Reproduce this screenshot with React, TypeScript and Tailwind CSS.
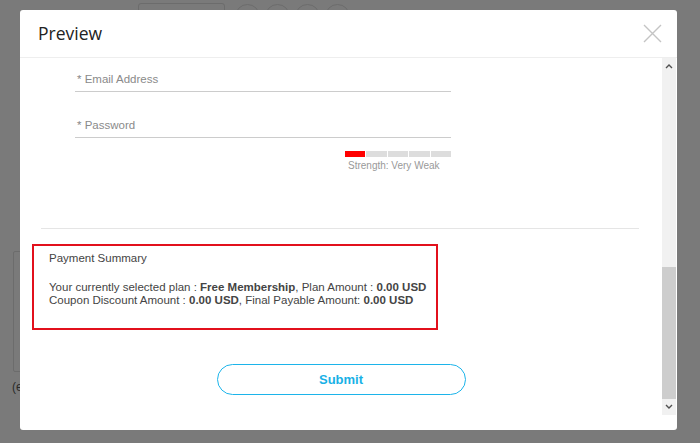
import React from "react";

export default function App() {
  return (
    <div className="relative w-[700px] h-[443px] overflow-hidden bg-[#7a7a7a] pt-[10px] pl-[20px]" style={{ fontFamily: '"Liberation Sans", Arial, sans-serif' }}>
      {/* background page elements under the overlay */}
      <div className="absolute left-[138px] top-[3px] w-[87px] h-[30px] rounded-[3px] border border-[#6c6c6c]" />
      {[235, 265, 295, 325].map((x) => (
        <div key={x} className="absolute top-[4px] w-[25px] h-[25px] rounded-full border border-[#6c6c6c]" style={{ left: x }} />
      ))}
      <div className="absolute left-[13px] top-[251px] w-[20px] h-[121px] rounded-[2px] border border-[#6c6c6c]" />
      <div className="absolute left-[12px] top-[378px] text-[12px] text-[#2a2a2a]">(e</div>

      {/* modal */}
      <div className="relative w-[657px] h-[420px] bg-white rounded-[3px] overflow-hidden flex flex-col">
        <div className="h-[48px] shrink-0 flex items-center justify-between pl-[18px] pr-[15px] border-b border-[#eeeeee]">
          <span className="text-[17.5px] text-[#222]" style={{ fontFamily: '"Open Sans", sans-serif' }}>Preview</span>
          <svg width="19" height="19" viewBox="0 0 19 19" className="mt-[-1px]">
            <path d="M1 1 L18 18 M18 1 L1 18" stroke="#c4c4c4" strokeWidth="1.4" fill="none" />
          </svg>
        </div>
        <div className="flex flex-1">
          <div className="w-[642px] flex flex-col">
            <div className="pl-[55px] w-[431px] flex flex-col">
              <div className="mt-[11px] h-[23px] flex items-center pl-[2px] border-b border-[#cccccc] text-[11.5px] text-[#8a8a8a]">* Email Address</div>
              <div className="mt-[23px] h-[23px] flex items-center pl-[2px] border-b border-[#cccccc] text-[11.5px] text-[#8a8a8a]">* Password</div>
              <div className="flex flex-col items-end mt-[13px]">
                <div className="w-[106px] h-[6px] flex gap-[1px]">
                  <div className="flex-1 bg-[#ff0000]" />
                  <div className="flex-1 bg-[#dddddd]" />
                  <div className="flex-1 bg-[#dddddd]" />
                  <div className="flex-1 bg-[#dddddd]" />
                  <div className="flex-1 bg-[#dddddd]" />
                </div>
                <div className="w-[106px] pl-[3px] mt-[1px] text-[10px] leading-[16px] text-[#999]">Strength: Very Weak</div>
              </div>
            </div>
            <div className="mt-[54px] ml-[21px] w-[598px] h-px bg-[#e5e5e5]" />
            <div className="mt-[15px] ml-[12px] w-[406px] h-[86px] border-2 border-[#e2101c] pl-[15px] pt-[5px] text-[11.5px] text-[#444]">
              <div className="leading-[14px]">Payment Summary</div>
              <div className="mt-[16px] leading-[13px] whitespace-nowrap">
                Your currently selected plan : <b>Free Membership</b>, Plan Amount : <b>0.00 USD</b>
              </div>
              <div className="leading-[13px] whitespace-nowrap">
                Coupon Discount Amount : <b>0.00 USD</b>, Final Payable Amount: <b>0.00 USD</b>
              </div>
            </div>
            <div className="mt-[34px] flex justify-center">
              <button className="w-[249px] h-[31px] rounded-full border border-[#1cb4ea] text-[13px] font-bold text-[#19b1e6] bg-white">Submit</button>
            </div>
          </div>
          <div className="w-[14px] h-[357px] bg-[#f1f1f1] flex flex-col">
            <div className="h-[16px] flex items-center justify-center">
              <svg width="8" height="6" viewBox="0 0 8 6"><path d="M1 5 L4 2 L7 5" stroke="#505050" strokeWidth="1.4" fill="none" /></svg>
            </div>
            <div className="flex-1 flex flex-col justify-end">
              <div className="h-[132px] bg-[#cdcdcd]" />
            </div>
            <div className="h-[16px] flex items-center justify-center">
              <svg width="8" height="6" viewBox="0 0 8 6"><path d="M1 1 L4 4 L7 1" stroke="#505050" strokeWidth="1.4" fill="none" /></svg>
            </div>
          </div>
        </div>
      </div>
    </div>
  );
}
